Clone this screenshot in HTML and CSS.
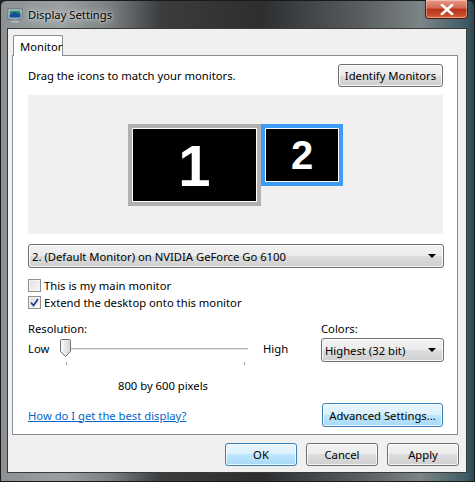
FILE: index.html
```html
<!DOCTYPE html>
<html>
<head>
<meta charset="utf-8">
<link rel="stylesheet" href="styles.css">
</head>
<body>
<div class="window">
  <div class="titlebar">
    <svg class="app-icon" width="16" height="16" viewBox="0 0 16 16">
      <rect x="1" y="2" width="14" height="10" rx="1" fill="#dfe6ee" stroke="#5a6a7a" stroke-width="1"/>
      <rect x="2.5" y="3.5" width="11" height="7" fill="#2a8a6a"/>
      <path d="M2.5 8 L7 5 L13.5 7 L13.5 10.5 L2.5 10.5 Z" fill="#1a4a9a"/>
      <rect x="6" y="12" width="4" height="2" fill="#8a9aaa"/>
      <rect x="4" y="14" width="8" height="1.5" fill="#b0bac4"/>
    </svg>
    <span class="title">Display Settings</span>
    <div class="close-btn">
      <svg width="14" height="11" viewBox="0 0 14 11">
        <path d="M2 1 L12 10 M12 1 L2 10" stroke="#fff" stroke-width="2.6" stroke-linecap="square"/>
      </svg>
    </div>
  </div>
  <div class="client">
    <div class="tabs">
      <div class="tab">Monitor</div>
    </div>
    <div class="panel">
      <div class="row-top">
        <span>Drag the icons to match your monitors.</span>
        <button class="btn identify">Identify Monitors</button>
      </div>
      <div class="monitor-area">
        <div class="monitor m1"><span>1</span></div>
        <div class="monitor m2"><span>2</span></div>
      </div>
      <div class="select wide">
        <span>2. (Default Monitor) on NVIDIA GeForce Go 6100</span>
        <span class="arrow"></span>
      </div>
      <label class="check"><span class="box"></span>This is my main monitor</label>
      <label class="check"><span class="box checked">
        <svg width="9" height="9" viewBox="0 0 9 9"><path d="M1 4.5 L3.5 7.5 L8 1" fill="none" stroke="#2c3e8c" stroke-width="1.8"/></svg>
      </span>Extend the desktop onto this monitor</label>
      <div class="settings">
        <div class="res">
          <div class="label">Resolution:</div>
          <div class="slider-row">
            <span class="low">Low</span>
            <div class="slider">
              <div class="track"></div>
              <svg class="thumb" width="11" height="18" viewBox="0 0 11 18">
                <defs>
                  <linearGradient id="tg" x1="0" y1="0" x2="1" y2="0">
                    <stop offset="0" stop-color="#fafafa"/>
                    <stop offset="1" stop-color="#d4d4d4"/>
                  </linearGradient>
                </defs>
                <path d="M1.5 0.5 H9.5 Q10.5 0.5 10.5 1.5 V12.5 L5.5 17.5 L0.5 12.5 V1.5 Q0.5 0.5 1.5 0.5 Z" fill="url(#tg)" stroke="#707070"/>
              </svg>
              <div class="ticks"><i></i><i></i></div>
            </div>
            <span>High</span>
          </div>
          <div class="pixels">800 by 600 pixels</div>
        </div>
        <div class="colors">
          <div class="label">Colors:</div>
          <div class="select small">
            <span>Highest (32 bit)</span>
            <span class="arrow"></span>
          </div>
        </div>
      </div>
      <div class="row-bottom">
        <a class="link" href="#">How do I get the best display?</a>
        <button class="btn blue advanced">Advanced Settings...</button>
      </div>
    </div>
    <div class="actions">
      <button class="btn blue">OK</button>
      <button class="btn">Cancel</button>
      <button class="btn">Apply</button>
    </div>
  </div>
</div>
</body>
</html>
```

FILE: styles.css
```css
* { box-sizing: border-box; }
html, body { margin: 0; padding: 0; }
body {
  width: 475px;
  height: 482px;
  overflow: hidden;
  background: #1c2226;
  font-family: "Noto Sans", "Open Sans", sans-serif;
  font-size: 11.25px;
  line-height: 15px;
  color: #000;
}
.window {
  width: 475px;
  height: 482px;
  display: flex;
  flex-direction: column;
  border-radius: 6px 6px 0 0;
  border: 1px solid #1a1a1a;
  background:
    linear-gradient(90deg, #8c9092 0px, #9aa0a2 60px, #7a7e80 110px, #3a3c3e 160px, #2c2e30 260px, #5a5e60 360px, #7c8486 420px, #3e5c66 465px, #28404a 475px);
}
.titlebar {
  height: 27px;
  display: flex;
  align-items: center;
  position: relative;
  padding-left: 6px;
}
.app-icon { margin-right: 5px; }
.title {
  color: #000;
  text-shadow: 0 0 8px rgba(255,255,255,0.9), 0 0 3px rgba(255,255,255,0.8);
}
.close-btn {
  position: absolute;
  top: -1px;
  right: 6px;
  width: 43px;
  height: 19px;
  border: 1px solid #4a1a14;
  border-top: none;
  border-radius: 0 0 4px 4px;
  background: linear-gradient(#e89a88 0%, #d26850 45%, #b8341c 50%, #c84a2c 85%, #e07048 100%);
  display: flex;
  align-items: center;
  justify-content: center;
  box-shadow: inset 0 0 0 1px rgba(255,255,255,0.35);
}
.client {
  flex: 1;
  margin: 0 7px 8px 6px;
  background: #f0f0f0;
  border: 1px solid #3a3a3a;
  display: flex;
  flex-direction: column;
  padding: 6px 8px 0 4px;
}
.tabs { display: flex; padding-left: 1px; height: 21px; position: relative; z-index: 1; }
.tab {
  width: 50px;
  height: 21px;
  border: 1px solid #898c95;
  border-bottom: none;
  background: #fff;
  padding: 3px 0 0 6px;
  border-radius: 2px 2px 0 0;
}
.panel {
  height: 380px;
  margin-top: -1px;
  background: #fff;
  border: 1px solid #898c95;
  padding: 8px 14px 0 15px;
  display: flex;
  flex-direction: column;
}
.row-top {
  display: flex;
  justify-content: space-between;
  align-items: center;
  height: 23px;
}
.btn {
  font-family: inherit;
  font-size: 11.25px;
  color: #000;
  height: 23px;
  border: 1px solid #707070;
  border-radius: 3px;
  background: linear-gradient(#f2f2f2 0%, #ebebeb 50%, #dddddd 50%, #cfcfcf 100%);
  box-shadow: inset 0 0 0 1px rgba(255,255,255,0.8);
  padding: 0 6px;
}
.btn.blue {
  border-color: #3c7fb1;
  background: linear-gradient(#eaf6fd 0%, #d9f0fc 50%, #bee6fd 50%, #a7d9f5 100%);
}
.identify { width: 105px; padding: 0; }
.monitor-area {
  margin-top: 8px;
  height: 139px;
  background: #f0f0f0;
  display: flex;
  justify-content: center;
  align-items: flex-start;
  padding-top: 29px;
}
.monitor {
  background: #000;
  color: #fff;
  font-family: "Liberation Sans", Arial, sans-serif;
  font-weight: bold;
  line-height: 1;
  display: flex;
  justify-content: center;
  align-items: center;
  box-shadow: inset 0 0 0 1px #fff;
}
.m1 {
  width: 133px;
  height: 82px;
  border: 4px solid #b0b0b0;
  font-size: 58px;
  padding-top: 2px;
}
.m2 {
  width: 82px;
  height: 62px;
  border: 4px solid #3c9cf8;
  font-size: 40px;
}
.select {
  height: 24px;
  border: 1px solid #707070;
  border-radius: 3px;
  background: linear-gradient(#f2f2f2 0%, #ebebeb 50%, #dddddd 50%, #cfcfcf 100%);
  box-shadow: inset 0 0 0 1px rgba(255,255,255,0.8);
  display: flex;
  align-items: center;
  justify-content: space-between;
  padding: 0 7px 0 3px;
}
.select.wide { margin-top: 10px; width: 416px; }
.arrow {
  width: 0; height: 0;
  border-left: 4px solid transparent;
  border-right: 4px solid transparent;
  border-top: 4px solid #000;
}
.check {
  display: flex;
  align-items: center;
  height: 17px;
}
.check:first-of-type { margin-top: 9px; }
.box {
  width: 13px;
  height: 13px;
  border: 1px solid #8e8f8f;
  background: linear-gradient(135deg, #dcdcdc, #fbfbfb);
  box-shadow: inset 0 0 0 1px #f4f4f4;
  margin-right: 3px;
  display: flex;
  align-items: center;
  justify-content: center;
}
.settings {
  display: flex;
  justify-content: space-between;
  margin-top: 9px;
}
.label { height: 17px; display: flex; align-items: center; }
.res { width: 262px; }
.slider-row {
  display: flex;
  align-items: flex-start;
  height: 39px;
  margin-top: 2px;
}
.slider-row span { padding-top: 2px; }
.slider-row .low { width: 23px; }
.slider {
  position: relative;
  width: 186px;
  margin: 0 15px 0 11px;
  height: 28px;
}
.track {
  position: absolute;
  left: 0; right: 0;
  top: 9px;
  height: 3px;
  border-top: 1px solid #b4b4b4;
  border-bottom: 1px solid #fff;
  background: #e6e6e6;
}
.thumb { position: absolute; left: -2px; top: 0; }
.ticks {
  position: absolute;
  left: 4px; right: 3px;
  top: 23px;
  display: flex;
  justify-content: space-between;
}
.ticks i { width: 1px; height: 3px; background: #a0a0a0; }
.pixels { text-align: center; padding-left: 8px; }
.colors { width: 123px; margin-right: -1px; }
.select.small { margin-top: 1px; width: 123px; }
.row-bottom {
  margin-top: auto;
  margin-bottom: 7px;
  display: flex;
  justify-content: space-between;
  align-items: center;
}
.link { color: #0066cc; text-decoration: underline; }
.advanced { width: 121px; height: 24px; padding: 0; }
.actions {
  display: flex;
  justify-content: flex-end;
  gap: 9px;
  margin-top: 8px;
  margin-right: -1px;
}
.actions .btn { width: 72px; height: 23px; }
```
